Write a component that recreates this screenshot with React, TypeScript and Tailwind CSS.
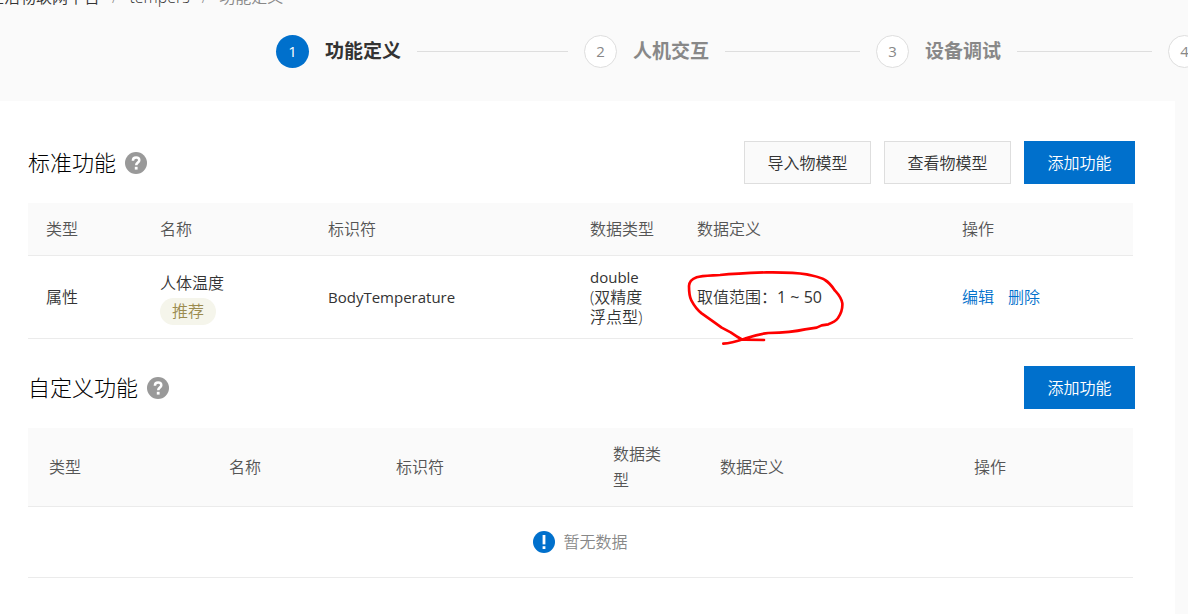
const steps = [
  { title: "功能定义", line: "w-[151px]", active: true },
  { title: "人机交互", line: "w-[135px]", active: false },
  { title: "设备调试", line: "w-[135px]", active: false },
  { title: "", line: "", active: false },
];

function HelpIcon() {
  return (
    <svg width="22" height="22" viewBox="0 0 22 22" aria-hidden="true">
      <circle cx="11" cy="11" r="11" fill="#999999" />
      <path
        d="M7.9 8.7C7.9 6.7 9.2 5.5 11.1 5.5C13.1 5.5 14.3 6.6 14.3 8.2C14.3 10.4 11.2 10.6 11.2 13.2"
        fill="none"
        stroke="white"
        strokeWidth="2.5"
      />
      <rect x="9.8" y="14.8" width="2.8" height="2.8" fill="white" />
    </svg>
  );
}

function NoticeIcon() {
  return (
    <svg width="22" height="22" viewBox="0 0 22 22" aria-hidden="true">
      <circle cx="11" cy="11" r="11" fill="#0070cc" />
      <rect x="9.6" y="4" width="2.8" height="9.4" fill="white" />
      <rect x="9.6" y="15.2" width="2.8" height="2.8" fill="white" />
    </svg>
  );
}

function Stepper() {
  return (
    <ol className="flex items-center gap-4 pl-[276px] mt-[26px]">
      {steps.map((step, i) => (
        <li key={i} className="flex items-center gap-4 shrink-0">
          <span
            className={
              step.active
                ? "flex items-center justify-center size-[33px] rounded-full bg-[#0070cc] text-white text-[15px] font-normal"
                : "flex items-center justify-center size-[33px] rounded-full bg-white border border-[#dedede] text-[#888888] text-[15px] font-normal"
            }
          >
            {i + 1}
          </span>
          {step.line && (
            <>
              <span
                className={
                  step.active
                    ? "text-[19px] font-bold text-[#333333]"
                    : "text-[19px] font-bold text-[#888888]"
                }
              >
                {step.title}
              </span>
              <span className={`h-px bg-[#dedede] ${step.line}`}></span>
            </>
          )}
        </li>
      ))}
    </ol>
  );
}

function AddButton() {
  return (
    <button className="h-[43px] min-w-[111px] px-[22px] bg-[#0070cc] text-white cursor-pointer">
      添加功能
    </button>
  );
}

function PlainButton({ label }: { label: string }) {
  return (
    <button className="h-[43px] min-w-[127px] px-[22px] bg-[#fafafa] border border-[#dedede] text-[#333333] cursor-pointer">
      {label}
    </button>
  );
}

function SectionTitle({ title }: { title: string }) {
  return (
    <h2 className="flex items-center gap-[9px] text-[22px] font-light text-black">
      {title}
      <HelpIcon />
    </h2>
  );
}

export default function App() {
  return (
    <div className="min-h-screen flex flex-col overflow-hidden bg-[#fafafa] text-base font-[350] text-[#333333] font-['Open_Sans','Noto_Sans_CJK_SC',sans-serif]">
      <header className="h-[101px] shrink-0">
        <nav className="flex gap-3 h-6 -mt-[15px] -ml-3 whitespace-nowrap">
          <a href="#">生活物联网平台</a>
          <span className="text-[#888888]">/</span>
          <a href="#">tempers</a>
          <span className="text-[#888888]">/</span>
          <span className="text-[#888888]">功能定义</span>
        </nav>
        <Stepper />
      </header>

      <main className="grow mr-[13px] pt-10 pl-7 pr-10 pb-9 bg-white">
        <section>
          <div className="flex items-center justify-between mb-[19px] h-[43px]">
            <SectionTitle title="标准功能" />
            <div className="flex gap-[13px]">
              <PlainButton label="导入物模型" />
              <PlainButton label="查看物模型" />
              <AddButton />
            </div>
          </div>
          <div className="mr-0.5">
            <table className="w-full table-fixed text-left border-collapse">
              <thead>
                <tr className="bg-[#fafafa] border-b border-[#ebebeb] leading-[26px] text-[#555555]">
                  <th className="w-[114px] px-[18px] py-[13px] font-[350]">类型</th>
                  <th className="w-[168px] px-[18px] py-[13px] font-[350]">名称</th>
                  <th className="w-[262px] px-[18px] py-[13px] font-[350]">标识符</th>
                  <th className="w-[107px] px-[18px] py-[13px] font-[350]">数据类型</th>
                  <th className="w-[265px] px-[18px] py-[13px] font-[350]">数据定义</th>
                  <th className="px-[18px] py-[13px] font-[350]">操作</th>
                </tr>
              </thead>
              <tbody>
                <tr className="h-[83px] border-b border-[#ebebeb]">
                  <td className="px-[18px]">属性</td>
                  <td className="px-[18px]">
                    <div className="leading-[26px]">人体温度</div>
                    <span className="block w-fit px-3 mt-0.5 rounded-full bg-[#f5f5eb] text-[#9b8b4f] leading-[27px]">
                      推荐
                    </span>
                  </td>
                  <td className="px-[18px] text-[15px] font-normal">BodyTemperature</td>
                  <td className="px-[18px] leading-5">
                    <span className="text-[15px] font-normal">double</span>
                    <br />
                    (双精度
                    <br />
                    浮点型)
                  </td>
                  <td className="relative px-[18px]">
                    取值范围：<span className="font-normal">1 ~ 50</span>
                    <svg
                      className="absolute left-[7px] top-[13px] pointer-events-none"
                      width="160"
                      height="77"
                      viewBox="378 207 480 231"
                      fill="none"
                      aria-hidden="true"
                    >
                      <path
                        d="M490 431C515 429 535 422 560 414C585 406 605 401 625 399C665 398 700 396 735 388L770 383L785 376L805 373C818 368 828 362 834 354C844 340 848 325 847 310C844 292 836 284 825 272C815 257 805 246 795 240C785 232 770 230 740 223C700 216 660 217 620 217C560 219 510 222 480 225C450 227 425 227 410 232C393 238 388 245 387 258C387 275 388 290 394 301C403 318 412 330 425 340L460 365L485 383L512 397L530 409C538 415 545 419 555 419L612 420"
                        stroke="#ff0000"
                        strokeWidth="8"
                        strokeLinecap="round"
                        strokeLinejoin="round"
                      />
                    </svg>
                  </td>
                  <td className="px-[18px]">
                    <div className="flex gap-3.5 text-[#0070cc]">
                      <a href="#">编辑</a>
                      <a href="#">删除</a>
                    </div>
                  </td>
                </tr>
              </tbody>
            </table>
          </div>
        </section>

        <section className="mt-[27px]">
          <div className="flex items-center justify-between mb-[19px] h-[43px]">
            <SectionTitle title="自定义功能" />
            <AddButton />
          </div>
          <div className="mr-0.5">
            <table className="w-full table-fixed text-left border-collapse">
              <thead>
                <tr className="bg-[#fafafa] border-b border-[#ebebeb] leading-[26px] text-[#555555]">
                  <th className="w-[180px] pl-[21px] pr-6 py-[13px] font-[350]">类型</th>
                  <th className="w-[167px] pl-[21px] pr-6 py-[13px] font-[350]">名称</th>
                  <th className="w-[217px] pl-[21px] pr-6 py-[13px] font-[350]">标识符</th>
                  <th className="w-[107px] pl-[21px] pr-6 py-[13px] font-[350]">数据类型</th>
                  <th className="w-[254px] pl-[21px] pr-6 py-[13px] font-[350]">数据定义</th>
                  <th className="pl-[21px] pr-6 py-[13px] font-[350]">操作</th>
                </tr>
              </thead>
              <tbody>
                <tr className="h-[71px] border-b border-[#ebebeb]">
                  <td colSpan={6}>
                    <div className="flex items-center justify-center gap-2 text-[#888888]">
                      <NoticeIcon />
                      暂无数据
                    </div>
                  </td>
                </tr>
              </tbody>
            </table>
          </div>
        </section>
      </main>
    </div>
  );
}
